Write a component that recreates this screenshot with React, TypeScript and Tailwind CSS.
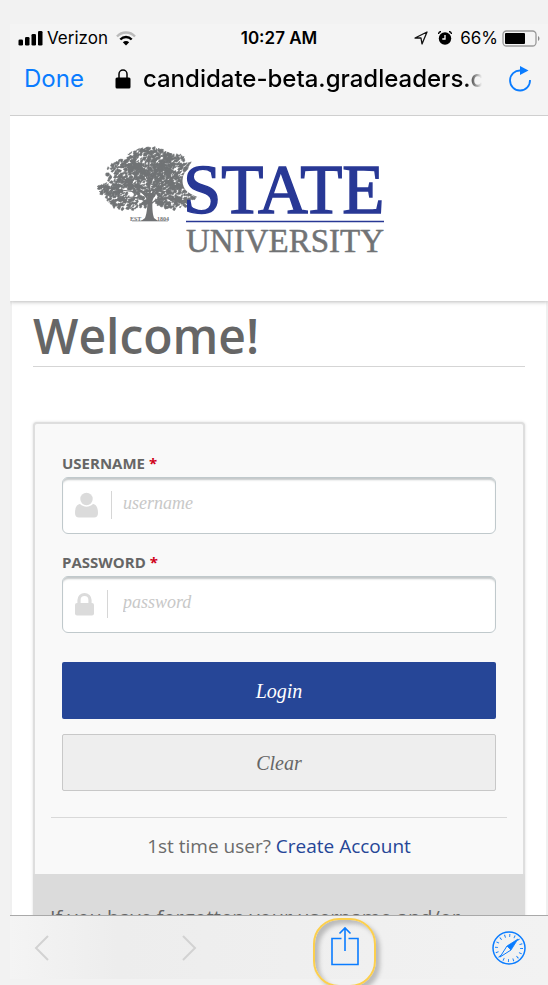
import type { ReactNode } from "react";

const BLUE = "#0a7cff";

// Small seeded generator so the foliage is the same on every render
function makeLeaves() {
    let seed = 7;
    const rand = () => {
        seed = (seed * 16807) % 2147483647;
        return seed / 2147483647;
    };
    const clumps = [
        { x: 54, y: 16, rx: 25, ry: 14, n: 240 },
        { x: 30, y: 28, rx: 20, ry: 15, n: 190 },
        { x: 78, y: 26, rx: 17, ry: 18, n: 200 },
        { x: 54, y: 34, rx: 28, ry: 15, n: 230 },
        { x: 14, y: 43, rx: 14, ry: 5, n: 60 },
        { x: 21, y: 50, rx: 13, ry: 5, n: 50 },
        { x: 33, y: 57, rx: 19, ry: 6, n: 80 },
        { x: 88, y: 46, rx: 17, ry: 10, n: 120 },
        { x: 76, y: 57, rx: 16, ry: 6, n: 80 },
        { x: 53, y: 47, rx: 16, ry: 9, n: 80 },
    ];
    let d = "";
    for (const c of clumps) {
        for (let i = 0; i < c.n; i++) {
            const a = rand() * Math.PI * 2;
            const r = Math.sqrt(rand());
            const x = (c.x + Math.cos(a) * r * c.rx).toFixed(1);
            const y = (c.y + Math.sin(a) * r * c.ry).toFixed(1);
            const w = (0.8 + rand() * 2).toFixed(1);
            const h = (rand() * 3 - 1.5).toFixed(1);
            d += `M${x} ${y}l${w} ${h}l-1 2l-${w} -0.6z`;
        }
    }
    return d;
}

const leaves = makeLeaves();

function Logo() {
    return (
        <svg viewBox="0 0 292 114" className="w-[292px] h-[114px]" role="img" aria-label="State University">
            <g fill="#717375" stroke="#717375">
                <path d={leaves} strokeWidth="0.6" />
                <path d="M51 48c1 12 0 20-2 25l-4 3h17l-4-3c-2-6-2-15-1-25z" stroke="none" />
                <g fill="none" strokeLinecap="round">
                    <path d="M53 57C49 45 39 43 24 31M55 56C60 43 70 40 83 27M54 52C53 38 52 25 53 11" strokeWidth="2" />
                    <path d="M52 58C43 50 29 51 13 57M56 58C66 49 80 53 92 62M40 47L3 42M66 47L96 41M53 35L36 15M54 36L71 13M33 51L23 62M71 52L82 60" strokeWidth="1.2" />
                </g>
                <path d="M96 47l10-1 6 3" fill="none" strokeWidth="1.5" />
                <path d="M36 76h36" strokeWidth="0.6" />
            </g>
            <g fill="#717375" fontFamily="Liberation Serif, serif" fontSize="6" fontWeight="700">
                <text x="34" y="76">EST.</text>
                <text x="61" y="76">1804</text>
            </g>
            <path d="M113 30C104 22 91 25 91 36C91 50 114 45 114 59C114 69 100 71 92 66" fill="none" stroke="#fff" strokeWidth="9" />
            <g fill="#283895" stroke="#283895">
                <text x="87" y="68" strokeWidth="1.4" fontFamily="Liberation Serif, serif" fontSize="69">STATE</text>
                <path d="M90 76.500H288" strokeWidth="1.6" />
            </g>
            <text x="90" y="107" fill="#717375" stroke="#717375" strokeWidth="0.5" fontFamily="Liberation Serif, serif" fontSize="33">UNIVERSITY</text>
        </svg>
    );
}

function StatusBar() {
    return (
        <div className="grid grid-cols-3 items-center h-7 pl-2 pr-2 text-[17px] leading-7 text-black">
            <div className="flex items-center gap-1">
                <svg viewBox="0 0 25 15" className="w-[25px] h-[15px]">
                    <rect x="0.500" y="8.500" width="4.500" height="6" rx="1.300" />
                    <rect x="7" y="6" width="4.500" height="8.500" rx="1.300" />
                    <rect x="13.500" y="3" width="4.500" height="11.500" rx="1.300" />
                    <rect x="20" y="0" width="4.500" height="14.500" rx="1.300" />
                </svg>
                <span>Verizon</span>
                <svg viewBox="0 0 20 15" className="ml-1 w-5 h-[15px]" fill="none" strokeWidth="2.400">
                    <path d="M1 5.500C6 0.200 14 0.200 19 5.500" stroke="#bababa" />
                    <path d="M4.300 8.500C7.600 5.200 12.400 5.200 15.700 8.500" stroke="#000" />
                    <path d="M6.800 11.200C8.700 9.600 11.300 9.600 13.200 11.200L10 14.600z" fill="#000" />
                </svg>
            </div>
            <div className="text-center font-semibold">10:27 AM</div>
            <div className="flex items-center justify-end">
                <svg viewBox="0 0 14 14" className="w-3.5 h-3.5" fill="none" stroke="#111" strokeWidth="1.300" strokeLinejoin="round">
                    <path d="M1 7L13 1L8 13L7 7z" />
                </svg>
                <svg viewBox="0 0 14 14" className="ml-2.5 w-3.5 h-3.5">
                    <circle cx="7" cy="7.500" r="6.200" />
                    <path d="M0.500 3C0.700 1.500 1.800 0.600 3 0.500M13.500 3C13.300 1.500 12.200 0.600 11 0.500" stroke="#000" strokeWidth="1.300" fill="none" />
                    <path d="M7 4V8H4.300" stroke="#fff" strokeWidth="1.300" fill="none" />
                </svg>
                <span className="ml-2">66%</span>
                <svg viewBox="0 0 38 17" className="ml-1 w-[38px] h-[17px]">
                    <rect x="1" y="1" width="33" height="15" rx="3.500" fill="none" stroke="#999" strokeWidth="1.300" />
                    <rect x="3" y="3" width="20" height="11" rx="1" />
                    <path d="M36 6c2 1 2 4 0 5z" fill="#888" />
                </svg>
            </div>
        </div>
    );
}

function AddressBar() {
    return (
        <div className="flex items-center h-[54px] pl-3.5 pr-4">
            <button type="button" className="text-[24px] leading-8 text-[#0a7cff]">Done</button>
            <svg viewBox="0 0 16 20" className="ml-[31px] w-4 h-5 shrink-0">
                <path d="M4 9V5a4 4 0 0 1 8 0v4" fill="none" stroke="#000" strokeWidth="1.500" />
                <rect x="0.500" y="8.500" width="15" height="11" rx="1.500" />
            </svg>
            <div className="ml-3 flex-1 min-w-0 overflow-hidden whitespace-nowrap text-[24px] leading-8 font-medium text-black [mask-image:linear-gradient(to_right,#000_calc(100%-16px),transparent)]">
                candidate-beta.gradleaders.com
            </div>
            <button type="button" aria-label="Reload" className="ml-[26px]">
                <svg viewBox="0 0 24 28" className="w-6 h-7" fill="none">
                    <path d="M12.500 5.500A10 10 0 1 0 22 15" stroke={BLUE} strokeWidth="1.800" />
                    <path d="M12 1L20.500 5.500L12 10z" fill={BLUE} />
                </svg>
            </button>
        </div>
    );
}

type FieldProps = {
    id: string;
    label: string;
    type: string;
    icon: ReactNode;
};

function Field({ id, label, type, icon }: FieldProps) {
    return (
        <div className="flex flex-col gap-0.5">
            <label htmlFor={id} className="text-[15px] leading-6 font-bold text-[#666] uppercase">
                {label} <span className="text-[#d0021b]">*</span>
            </label>
            <div className="relative">
                <div className="pointer-events-none absolute left-3 top-3.5 flex items-center gap-3 h-7 text-[#dbdbdb]">
                    {icon}
                    <span className="w-px h-7 bg-[#d6d6d6]" />
                </div>
                <input
                    id={id}
                    type={type}
                    placeholder={id}
                    className="block w-full h-[57px] rounded-md border border-[#c0c9cc] bg-white pl-[60px] pr-4 pb-1 font-['Liberation_Serif',serif] text-[18px] italic text-[#666] placeholder:text-[#c8c8c8] placeholder:opacity-100 shadow-[inset_0_3px_2px_-1px_#c4c8c9]"
                />
            </div>
        </div>
    );
}

function LoginCard() {
    return (
        <section className="mt-[55px] rounded-t-sm border-2 border-[#dedede] bg-[#f9f9f9] shadow-[0_0_3px_#ddd]">
            <form className="flex flex-col px-[27px] pt-[27px]" onSubmit={(e) => e.preventDefault()}>
                <div className="flex flex-col gap-4">
                    <Field
                        id="username"
                        label="Username"
                        type="text"
                        icon={
                            <svg viewBox="0 0 25 26" className="w-[25px] h-[26px]" fill="currentColor">
                                <circle cx="12.500" cy="7" r="6.200" />
                                <path d="M6 12C2 12.500 1 17 1 21C1 24 2.500 25.500 5 25.500H20C22.500 25.500 24 24 24 21C24 17 23 12.500 19 12C15 15.500 10 15.500 6 12z" />
                            </svg>
                        }
                    />
                    <Field
                        id="password"
                        label="Password"
                        type="password"
                        icon={
                            <svg viewBox="0 0 21 26" className="w-[21px] h-[26px]" fill="none">
                                <path d="M5 14V9a5.500 5.500 0 0 1 11 0v5" stroke="currentColor" strokeWidth="3.200" />
                                <rect x="1" y="12" width="19" height="12.500" rx="2" fill="currentColor" />
                            </svg>
                        }
                    />
                </div>
                <button type="submit" className="mt-[29px] h-[57px] rounded-xs bg-[#264697] font-['Liberation_Serif',serif] text-[20px] italic text-white">
                    Login
                </button>
                <button type="reset" className="mt-[15px] h-[57px] rounded-xs border border-[#c8c8c8] bg-[#eee] font-['Liberation_Serif',serif] text-[20px] italic text-[#666]">
                    Clear
                </button>
            </form>
            <p className="mx-4 mt-[26px] h-[57px] border-t border-[#d9d9d9] text-center text-[19px] leading-[56px] text-[#6b6b6b]">
                1st time user? <a href="#create" className="text-[#264697]">Create Account</a>
            </p>
            <div className="-mx-0.5 h-40 bg-[#dbdbdb] px-[17px] pt-[30px] text-[20px] leading-7 text-[#666]">
                If you have forgotten your username and/or
            </div>
        </section>
    );
}

function Toolbar() {
    return (
        <nav className="shrink-0 border-t border-[#a9a9a9] bg-gradient-to-r from-[#f4f4f4] via-[#ededed] via-20% to-[#f2f2f2] flex items-center justify-between h-[64px] pl-6 pr-[22px]">
            <button type="button" aria-label="Back">
                <svg viewBox="0 0 15 26" className="w-[15px] h-[26px]" fill="none" stroke="#d2d2d2" strokeWidth="2">
                    <path d="M14 1L2 13L14 25" />
                </svg>
            </button>
            <button type="button" aria-label="Forward">
                <svg viewBox="0 0 15 26" className="w-[15px] h-[26px]" fill="none" stroke="#d2d2d2" strokeWidth="2">
                    <path d="M1 1L13 13L1 25" />
                </svg>
            </button>
            <button type="button" aria-label="Share" className="relative mb-1">
                <span className="absolute -left-[18px] -top-2 w-[63px] h-[69px] rounded-[26px] border-2 border-[#fccf4d] shadow-[4px_4px_4px_#bbb,inset_4px_4px_4px_#bbb]" />
                <svg viewBox="0 0 28 40" className="relative w-7 h-10" fill="none" stroke={BLUE} strokeWidth="1.600">
                    <path d="M10.500 12.500H1V38.500H27V12.500H17.500M14 25V2M8.500 7.500L14 2L19.500 7.500" />
                </svg>
            </button>
            <button type="button" aria-label="Open in Safari">
                <svg viewBox="0 0 34 34" className="w-[34px] h-[34px]" fill="none" stroke={BLUE}>
                    <circle cx="17" cy="17" r="16" strokeWidth="1.500" />
                    <circle cx="17" cy="17" r="12.500" strokeWidth="3" strokeDasharray="0.9 4.008" />
                    <path d="M26 8L19 19L15 15z" fill={BLUE} strokeWidth="0.800" />
                    <path d="M15 15L8 26L19 19" strokeWidth="1" />
                </svg>
            </button>
        </nav>
    );
}

export default function App() {
    return (
        <div className="h-screen overflow-hidden bg-[#f2f2f2] pl-2.5 pt-6 pb-1.5 font-['Inter',sans-serif]">
            <div className="flex h-full flex-col">
                <header className="shrink-0 border-b border-[#cfcfcf] bg-[#f4f4f4] pb-[9px]">
                    <StatusBar />
                    <AddressBar />
                </header>
                <main className="flex-1 min-h-0 overflow-hidden bg-white font-['Open_Sans',sans-serif]">
                    <div className="relative h-[185px] pl-[86px] pt-[29px] bg-white shadow-[0_1px_4px_#bbb]">
                        <Logo />
                    </div>
                    <div className="border-x-2 border-[#f0f0f0] pl-[21px] pr-[21px]">
                        <h1 className="border-b border-[#d5d5d5] pt-[5px] text-[48px] leading-[60px] font-semibold text-[#666]">Welcome!</h1>
                        <LoginCard />
                    </div>
                </main>
                <Toolbar />
            </div>
        </div>
    );
}
